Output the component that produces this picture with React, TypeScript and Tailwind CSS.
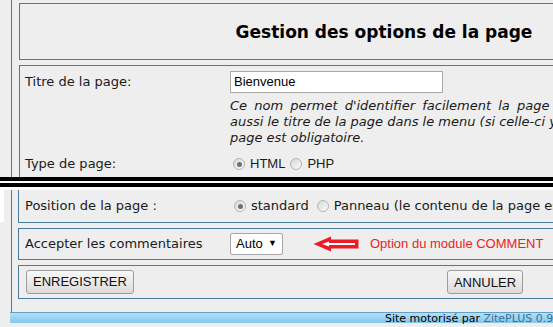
import React from 'react';

const Radio: React.FC<{ checked?: boolean }> = ({ checked }) => (
  <span className="inline-flex w-[12px] h-[12px] shrink-0 items-center justify-center rounded-full border border-[#b4b4b4] bg-linear-to-br from-[#d8d8d8] to-[#fbfbfb]">
    {checked && <span className="w-[5px] h-[5px] rounded-full bg-[#707070]" />}
  </span>
);

const Button: React.FC<{ label: string }> = ({ label }) => (
  <button className="h-[24px] px-[6px] rounded-[3px] border border-[#9c9c9c] bg-linear-to-b from-[#f7f7f7] to-[#dcdcdc] text-[13px] text-[#111] font-['Liberation_Sans',Arial,sans-serif]">
    {label}
  </button>
);

const App: React.FC = () => {
  return (
    <div className="w-[553px] h-[327px] overflow-hidden bg-[#eeeeee] text-[#1a1a1a] font-['DejaVu_Sans',Verdana,sans-serif]">
      {/* upper capture */}
      <div className="h-[177px] overflow-hidden pl-[11px]">
        <div className="h-full border-l border-[#4a7b9d] pl-[7px] pt-[3px]">
          <div className="w-[730px] h-[57px] border border-[#4a7b9d] flex items-center justify-center pt-[2px]">
            <h1 className="text-[17px] font-bold text-black">Gestion des options de la page</h1>
          </div>
          <div className="mt-[5px] w-[730px] h-[200px] border border-[#4a7b9d] grid grid-cols-[210px_1fr] content-start">
            <div className="pl-[5px] pt-[5px] h-[27px] flex items-end pb-[2px] text-[13px]">Titre de la page:</div>
            <div className="pt-[5px]">
              <div className="w-[213px] h-[22px] border border-[#a9a9a9] bg-white px-[3px] flex items-center text-[13px] text-black font-['Liberation_Sans',Arial,sans-serif]">
                Bienvenue
              </div>
            </div>
            <div />
            <div className="mt-[5px] text-[13px] leading-[16px] italic whitespace-nowrap">
              <p className="[word-spacing:3px]">Ce nom permet d'identifier facilement la page et sera</p>
              <p>aussi le titre de la page dans le menu (si celle-ci y figure). Ce titre de</p>
              <p>page est obligatoire.</p>
            </div>
            <div className="pl-[5px] mt-[10px] h-[16px] flex items-center text-[13px]">Type de page:</div>
            <div className="mt-[10px] h-[16px] flex items-center gap-[5px] pl-[3px] text-[13px] font-['Liberation_Sans',Arial,sans-serif]">
              <Radio checked />
              <span>HTML</span>
              <Radio />
              <span>PHP</span>
            </div>
          </div>
        </div>
      </div>

      {/* capture separator */}
      <div className="h-[4px] bg-black" />
      <div className="h-[2px] bg-white" />
      <div className="h-[4px] bg-black" />
      <div className="h-[3px] bg-white" />

      {/* lower capture */}
      <div className="flex">
        <div className="w-[4px] h-[32px] bg-white shrink-0" />
        <div className="pl-[7px]">
          <div className="h-[122px] border-l border-[#4a7b9d] pl-[6px]">
            <div className="w-[730px] h-[33px] border-x border-b border-[#4a7b9d] grid grid-cols-[211px_1fr] items-center">
              <div className="pl-[6px] text-[13px]">Position de la page :</div>
              <div className="flex items-center gap-[5px] pl-[4px] text-[13px] whitespace-nowrap">
                <Radio checked />
                <span className="mr-[3px]">standard</span>
                <Radio />
                <span>Panneau (le contenu de la page est affiché dans un panneau)</span>
              </div>
            </div>
            <div className="mt-[5px] w-[730px] h-[32px] border border-[#4a7b9d] grid grid-cols-[211px_1fr] items-center">
              <div className="pl-[6px] text-[13px]">Accepter les commentaires</div>
              <div className="flex items-center">
                <div className="w-[53px] h-[22px] border border-[#a6a6a6] rounded-[2px] bg-white flex items-center justify-between px-[5px] text-[13px] text-black font-['Liberation_Sans',Arial,sans-serif]">
                  <span>Auto</span>
                  <span className="text-[9px]">▼</span>
                </div>
                <svg className="ml-[30px]" width="46" height="16" viewBox="0 0 46 16">
                  <path d="M0.5 8 L18 0.5 L18 3.5 L45.5 3.5 L45.5 12.5 L18 12.5 L18 15.5 Z" fill="#ec1c24" />
                  <path d="M9 8 L16 5.6 L16 7.1 L42 7.1 L42 8.9 L16 8.9 L16 10.4 Z" fill="#ffffff" />
                </svg>
                <span className="ml-[11px] text-[13px] text-[#ec1c24] font-['Liberation_Sans',Arial,sans-serif]">
                  Option du module COMMENT
                </span>
              </div>
            </div>
            <div className="mt-[5px] w-[730px] h-[34px] border border-[#4a7b9d] flex items-center pl-[7px]">
              <Button label="ENREGISTRER" />
              <div className="ml-[313px]">
                <Button label="ANNULER" />
              </div>
            </div>
          </div>
          <div className="-ml-[1px] w-[560px] h-[11px] border-t border-[#5f9fc8] bg-linear-to-b from-[#b4e0f7] to-[#84c6ec] flex items-center pl-[375px] text-[11px] leading-none whitespace-nowrap">
            <span className="text-black">Site motorisé par&nbsp;</span>
            <span className="text-[#3d7190]">ZitePLUS 0.9.2</span>
          </div>
        </div>
      </div>
    </div>
  );
};

export default App;
